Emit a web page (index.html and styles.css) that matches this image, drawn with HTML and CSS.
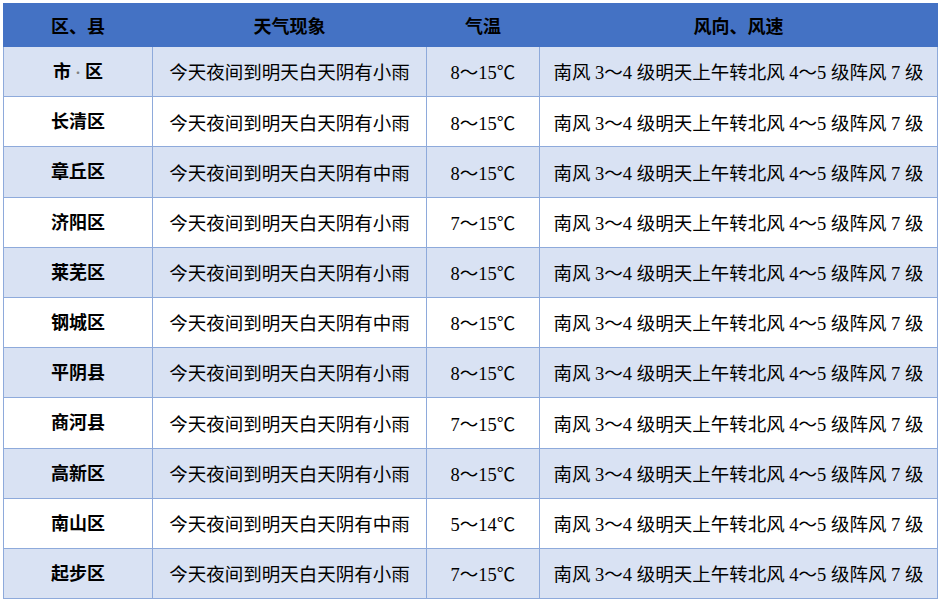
FILE: index.html
```html
<!DOCTYPE html>
<html lang="zh">
<head>
<meta charset="utf-8">
<link rel="stylesheet" href="styles.css">
</head>
<body>
<table class="weather">
  <colgroup>
    <col class="c1"><col class="c2"><col class="c3"><col class="c4">
  </colgroup>
  <thead>
    <tr><th>区、县</th><th>天气现象</th><th>气温</th><th>风向、风速</th></tr>
  </thead>
  <tbody>
    <tr class="alt"><td class="name">市<span class="dot">·</span>区</td><td>今天夜间到明天白天阴有小雨</td><td>8～15℃</td><td>南风 3～4 级明天上午转北风 4～5 级阵风 7 级</td></tr>
    <tr><td class="name">长清区</td><td>今天夜间到明天白天阴有小雨</td><td>8～15℃</td><td>南风 3～4 级明天上午转北风 4～5 级阵风 7 级</td></tr>
    <tr class="alt"><td class="name">章丘区</td><td>今天夜间到明天白天阴有中雨</td><td>8～15℃</td><td>南风 3～4 级明天上午转北风 4～5 级阵风 7 级</td></tr>
    <tr><td class="name">济阳区</td><td>今天夜间到明天白天阴有小雨</td><td>7～15℃</td><td>南风 3～4 级明天上午转北风 4～5 级阵风 7 级</td></tr>
    <tr class="alt"><td class="name">莱芜区</td><td>今天夜间到明天白天阴有小雨</td><td>8～15℃</td><td>南风 3～4 级明天上午转北风 4～5 级阵风 7 级</td></tr>
    <tr><td class="name">钢城区</td><td>今天夜间到明天白天阴有中雨</td><td>8～15℃</td><td>南风 3～4 级明天上午转北风 4～5 级阵风 7 级</td></tr>
    <tr class="alt"><td class="name">平阴县</td><td>今天夜间到明天白天阴有小雨</td><td>8～15℃</td><td>南风 3～4 级明天上午转北风 4～5 级阵风 7 级</td></tr>
    <tr><td class="name">商河县</td><td>今天夜间到明天白天阴有小雨</td><td>7～15℃</td><td>南风 3～4 级明天上午转北风 4～5 级阵风 7 级</td></tr>
    <tr class="alt"><td class="name">高新区</td><td>今天夜间到明天白天阴有小雨</td><td>8～15℃</td><td>南风 3～4 级明天上午转北风 4～5 级阵风 7 级</td></tr>
    <tr><td class="name">南山区</td><td>今天夜间到明天白天阴有中雨</td><td>5～14℃</td><td>南风 3～4 级明天上午转北风 4～5 级阵风 7 级</td></tr>
    <tr class="alt"><td class="name">起步区</td><td>今天夜间到明天白天阴有小雨</td><td>7～15℃</td><td>南风 3～4 级明天上午转北风 4～5 级阵风 7 级</td></tr>
  </tbody>
</table>
</body>
</html>
```
FILE: styles.css
```css
html, body {
  margin: 0;
  padding: 0;
  background: #ffffff;
}
body {
  padding: 3px 0 0 3px;
  font-family: "Liberation Serif", "Noto Sans CJK SC", serif;
  color: #000;
}
.weather {
  border-collapse: collapse;
  table-layout: fixed;
  width: 934px;
}
.c1 { width: 149px; }
.c2 { width: 274px; }
.c3 { width: 113px; }
.c4 { width: 398px; }
.weather th {
  background: #4472c4;
  box-sizing: border-box;
  height: 43px;
  padding: 0 0 0 0;
  font-family: "Noto Sans CJK SC", sans-serif;
  font-weight: 700;
  font-size: 18px;
  text-align: center;
  vertical-align: middle;
  border: 1px solid #4472c4;
  line-height: 1;
}
.weather td {
  box-sizing: border-box;
  height: 50.2px;
  padding: 4px 0 0 0;
  border: 1px solid #8eaadb;
  text-align: center;
  vertical-align: middle;
  font-size: 18.5px;
  line-height: 1;
  white-space: nowrap;
}
.weather td.name {
  font-family: "Noto Sans CJK SC", sans-serif;
  font-weight: 700;
  font-size: 18px;
  padding: 0 0 3px 0;
}
.weather tr.alt td {
  background: #d9e2f3;
}
.dot {
  color: #808080;
  font-weight: 400;
  font-size: 12px;
  margin: 0 1px;
}
```
